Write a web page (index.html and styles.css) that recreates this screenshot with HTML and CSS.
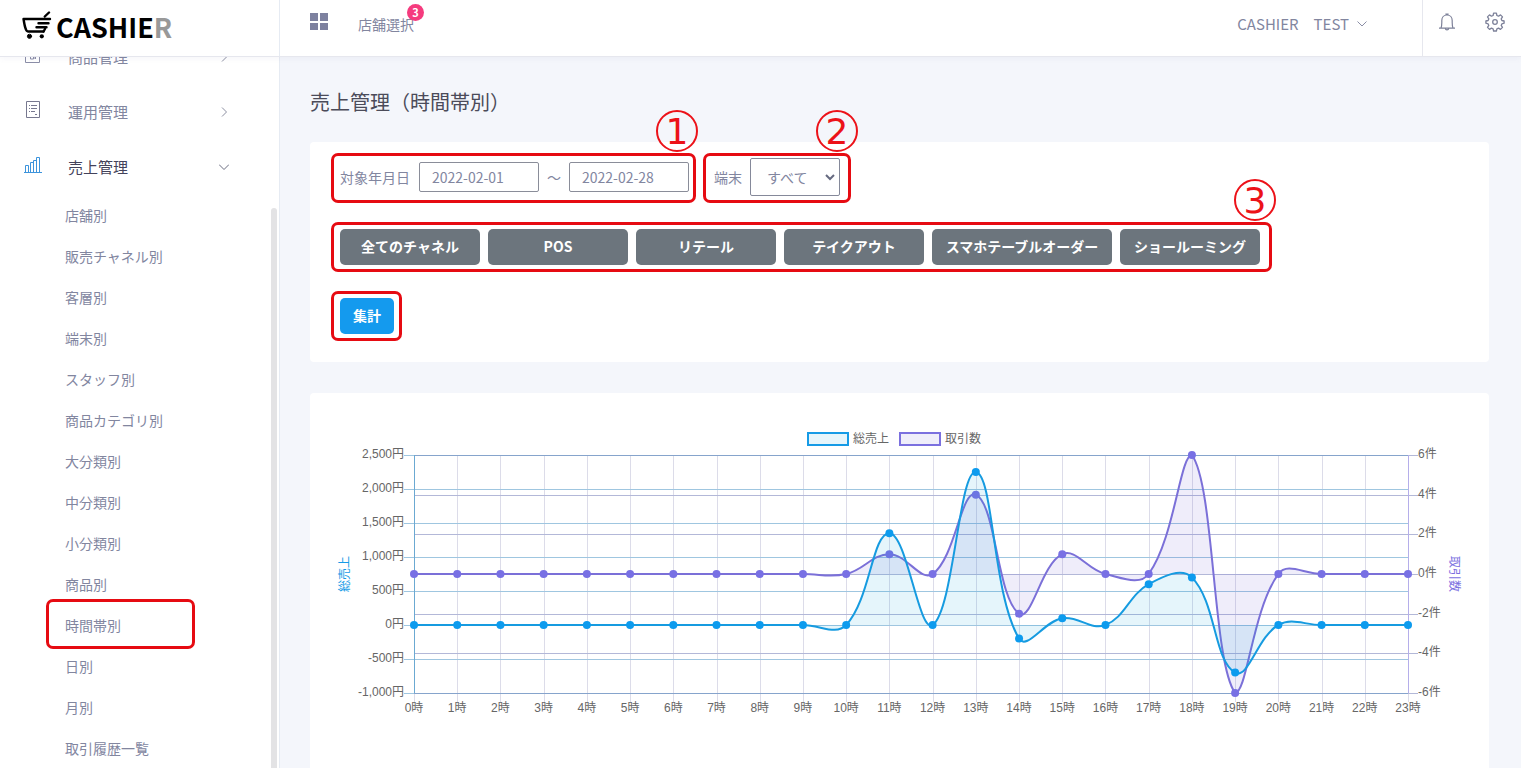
FILE: index.html
```html
<!DOCTYPE html>
<html lang="ja">
<head>
<meta charset="utf-8">
<meta name="viewport" content="width=device-width, initial-scale=1">
<title>売上管理（時間帯別）</title>
<link rel="stylesheet" href="styles.css">
</head>
<body>
<header class="topbar">
  <a class="logo" href="#">
    <svg class="logo-mark" viewBox="0 0 30 29" width="30" height="29" fill="none" stroke="#000" stroke-linecap="round" stroke-linejoin="round" aria-hidden="true">
      <path stroke-width="2.400" d="M22.800 5.500 27 1.500M28 8H1.500C2.500 14 3.500 20.500 6 20.500H21.500"/>
      <path stroke-width="2.400" d="M16.500 12.200H26.500M14.500 16.200H24.500M21.500 20.500 23 18"/>
      <circle cx="7.500" cy="25.300" r="2.100"/>
      <circle cx="7.500" cy="25.300" r="1.900" fill="#000" stroke="none"/>
      <circle cx="19.800" cy="25.300" r="2.100" fill="#000" stroke="none"/>
    </svg>
    <span class="logo-text">CASHIE<span class="logo-tail">R</span></span>
  </a>
  <div class="topbar-main">
    <button class="icon-button apps" type="button" aria-label="メニュー">
      <svg width="18" height="18" viewBox="0 0 18 18" fill="#7d819f" aria-hidden="true"><path d="M0 0h8v8H0zM10 0h8v8h-8zM0 10h8v7H0zM10 10h8v7h-8z"/></svg>
    </button>
    <a class="store-link" href="#">店舗選択<span class="badge">3</span></a>
    <button class="account" type="button">CASHIER　TEST
      <svg width="10" height="6" viewBox="0 0 10 6" fill="none" stroke="#8b8ea6" aria-hidden="true"><path d="M.5.5 5 5 9.500.5"/></svg>
    </button>
  </div>
  <div class="topbar-tools">
    <button class="icon-button" type="button" aria-label="通知">
      <svg width="18" height="18" viewBox="0 0 18 18" fill="none" stroke="#7d8199" stroke-width="1.200" aria-hidden="true"><path d="M1 15.200H17M3 15c.6-1.500.8-3 .8-5.500V7.500C3.800 4.500 5.800 2 9 2s5.200 2.500 5.200 5.500v2c0 2.500.2 4 .8 5.500M8 2V1h2v1M7.300 15.500c.2 1.800 3.200 1.800 3.400 0"/></svg>
    </button>
    <button class="icon-button" type="button" aria-label="設定">
      <svg width="20" height="20" viewBox="0 0 20 20" fill="none" stroke="#7d8199" stroke-width="1.300" stroke-linejoin="round" aria-hidden="true"><path d="M8.600 1.200h2.800l.5 2.300 1.600.7 2-1.300 2 2-1.300 2 .7 1.600 2.200.5v2.200l-2.200.6-.7 1.600 1.300 2-2 2-2-1.300-1.600.7-.5 2.200H8.600l-.5-2.200-1.600-.7-2 1.300-2-2 1.300-2-.7-1.600-2.200-.6V9l2.200-.5.7-1.600-1.300-2 2-2 2 1.300 1.600-.7z"/><circle cx="10" cy="10" r="2.300"/></svg>
    </button>
  </div>
</header>

<div class="layout">
  <aside class="sidebar">
    <nav class="menu">
      <a class="menu-item" href="#">
        <svg class="menu-icon" width="18" height="18" viewBox="0 0 18 18" fill="none" stroke="#8b8ea8" aria-hidden="true"><path d="M1.500 1.500h14v15h-14zM6.500 8v5h3V8M11.500 8v5M9.500 13l2-2"/></svg>
        <span>商品管理</span>
        <svg class="menu-arrow" width="10" height="10" viewBox="0 0 10 10" fill="none" stroke="#8b8ea0" aria-hidden="true"><path d="M3 .5 7.500 5 3 9.500"/></svg>
      </a>
      <a class="menu-item" href="#">
        <svg class="menu-icon" width="18" height="18" viewBox="0 0 18 18" fill="none" stroke="#77788f" aria-hidden="true"><path d="M2.500.5h13v16h-13zM5 4.500h1M7 4.500h6M5 7.500h1M7 7.500h6M5 10.500h1M7 10.500h4M11 13.500h2"/></svg>
        <span>運用管理</span>
        <svg class="menu-arrow" width="10" height="10" viewBox="0 0 10 10" fill="none" stroke="#8b8ea0" aria-hidden="true"><path d="M3 .5 7.500 5 3 9.500"/></svg>
      </a>
      <a class="menu-item is-open" href="#">
        <svg class="menu-icon" width="18" height="18" viewBox="0 0 18 18" fill="none" stroke="#3d94dc" aria-hidden="true"><path d="M0 16.500h18M1.500 16V9.500h3V16M6.500 16V6.500h3V16M9.500 16V4.500h3V16M12.500 16V1.500h3V16"/></svg>
        <span>売上管理</span>
        <svg class="menu-arrow" width="10" height="10" viewBox="0 0 10 10" fill="none" stroke="#6b6d80" aria-hidden="true"><path d="M0 2.500 5 7.500 10 2.500"/></svg>
      </a>
      <ul class="submenu">
        <li><a href="#">店舗別</a></li>
        <li><a href="#">販売チャネル別</a></li>
        <li><a href="#">客層別</a></li>
        <li><a href="#">端末別</a></li>
        <li><a href="#">スタッフ別</a></li>
        <li><a href="#">商品カテゴリ別</a></li>
        <li><a href="#">大分類別</a></li>
        <li><a href="#">中分類別</a></li>
        <li><a href="#">小分類別</a></li>
        <li><a href="#">商品別</a></li>
        <li class="is-marked"><a href="#" aria-current="page">時間帯別</a></li>
        <li><a href="#">日別</a></li>
        <li><a href="#">月別</a></li>
        <li><a href="#">取引履歴一覧</a></li>
      </ul>
    </nav>
    <div class="scroll-thumb"></div>
  </aside>

  <main class="content">
    <h1>売上管理（時間帯別）</h1>

    <form class="card filters">
      <div class="filter-row">
        <div class="frame dates">
          <label for="from">対象年月日</label>
          <input id="from" type="text" value="2022-02-01">
          <span>～</span>
          <input id="to" type="text" value="2022-02-28" aria-label="終了日">
          <span class="marker">1</span>
        </div>
        <div class="frame terminal">
          <label for="terminal">端末</label>
          <span class="select-box">
            <select id="terminal"><option>すべて</option></select>
            <svg width="10" height="7" viewBox="0 0 10 7" fill="none" stroke="#666a80" stroke-width="2" aria-hidden="true"><path d="M1 1 5 5 9 1"/></svg>
          </span>
          <span class="marker">2</span>
        </div>
      </div>
      <div class="frame channels">
        <button type="button">全てのチャネル</button>
        <button type="button">POS</button>
        <button type="button">リテール</button>
        <button type="button">テイクアウト</button>
        <button class="wide" type="button">スマホテーブルオーダー</button>
        <button type="button">ショールーミング</button>
        <span class="marker">3</span>
      </div>
      <div class="frame submit">
        <button class="primary" type="submit">集計</button>
      </div>
    </form>

    <section class="card chart-card" aria-label="時間帯別グラフ">
      <div class="legend">
        <span class="legend-item"><i class="swatch sales"></i>総売上</span>
        <span class="legend-item"><i class="swatch count"></i>取引数</span>
      </div>
      <svg id="chart" class="chart" role="img" aria-label="総売上と取引数"></svg>
    </section>
  </main>
</div>
<script src="chart.js"></script>
</body>
</html>
```

FILE: styles.css
```css
* { box-sizing: border-box; }

body {
  margin: 0;
  height: 100vh;
  display: flex;
  flex-direction: column;
  overflow: hidden;
  background: #f4f6fb;
  color: #82869f;
  font: 14px/20px "Noto Sans CJK JP", "Noto Sans", sans-serif;
}

a { color: inherit; text-decoration: none; }
button, input, select { font: inherit; color: inherit; }
svg { display: block; }

/* Header */
.topbar {
  display: flex;
  flex: none;
  height: 57px;
  background: #fff;
  border-bottom: 1px solid #e6e7ee;
  box-shadow: 0 1px 6px rgba(120, 110, 170, .08);
  position: relative;
  z-index: 1;
}

.logo {
  display: flex;
  gap: 4px;
  width: 280px;
  padding: 11px 0 0 22px;
  border-right: 1px solid #e6ebf3;
}

.logo-text {
  color: #000;
  font: bold 27px/32px "Noto Sans CJK JP", sans-serif;
}

.logo-tail { color: #999; }

.topbar-main {
  display: flex;
  align-items: center;
  flex: 1;
  padding: 0 55px 8px 30px;
}

.topbar-tools {
  display: flex;
  align-items: center;
  gap: 29px;
  padding: 0 16px 14px 15px;
  border-left: 1px solid #e6e7ee;
}

.icon-button, .account {
  padding: 0;
  border: 0;
  background: none;
}

.icon-button { padding-top: 2px; }
.apps { padding: 0 0 4px; }

.store-link { position: relative; margin-left: 30px; }

.badge {
  position: absolute;
  top: -10px;
  right: -10px;
  width: 17px;
  height: 17px;
  border-radius: 50%;
  background: #f53b7e;
  color: #fff;
  font-size: 11px;
  font-weight: bold;
  line-height: 17px;
  text-align: center;
}

.account {
  display: flex;
  align-items: center;
  gap: 8px;
  margin-left: auto;
  font-size: 15px;
}

/* Sidebar */
.layout { display: flex; flex: 1; min-height: 0; }

.sidebar {
  position: relative;
  width: 280px;
  flex: none;
  overflow: hidden;
  background: #fff;
  border-right: 1px solid #e6ebf3;
}

.menu { margin-top: -28px; }

.menu-item {
  display: flex;
  align-items: center;
  height: 55px;
  padding: 0 50px 0 24px;
  font-size: 15px;
}

.menu-icon { margin: -4px 26px 0 0; }
.menu-arrow { margin-left: auto; }
.is-open { color: #43425a; }

.submenu { margin: 0; padding: 0; list-style: none; }
.submenu li { position: relative; }
.submenu a { display: block; padding: 11px 0 10px 65px; }

.is-marked::after {
  content: "";
  position: absolute;
  inset: -5px 84px -4px 46px;
  border: 3px solid #e60b12;
  border-radius: 7px;
}

.scroll-thumb {
  position: absolute;
  top: 151px;
  right: 2px;
  bottom: 0;
  width: 6px;
  border-radius: 3px 3px 0 0;
  background: #e3e3e5;
}

/* Content */
.content { flex: 1; min-width: 0; padding: 30px 32px 0 30px; overflow: hidden; }

h1 {
  margin: 0 0 25px;
  color: #4b4b59;
  font-size: 20px;
  font-weight: normal;
  line-height: 30px;
}

.card { background: #fff; border-radius: 4px; }

.filters {
  display: flex;
  flex-direction: column;
  align-items: flex-start;
  gap: 19px;
  margin-bottom: 31px;
  padding: 11px 21px 21px;
}

.filter-row { display: flex; gap: 7px; }

.frame {
  position: relative;
  display: flex;
  align-items: center;
  gap: 8px;
  height: 50px;
  padding: 0 6px;
  border: 3px solid #e60b12;
  border-radius: 7px;
}

.dates, .terminal { padding-bottom: 2px; }
.dates { padding-right: 4px; }
.dates label { margin-right: 1px; }
.terminal { padding-left: 8px; padding-right: 8px; }
.channels { padding-right: 9px; }
.channels, .submit { padding-bottom: 1px; }
.submit { padding-right: 5px; }

.frame input {
  width: 120px;
  height: 30px;
  padding: 0 12px;
  border: 1px solid #8a8d99;
  border-radius: 2px;
  background: #fff;
}

.select-box { position: relative; }

.select-box select {
  display: block;
  width: 90px;
  height: 38px;
  padding: 0 16px;
  border: 1px solid #85899a;
  border-radius: 2px;
  background: #fff;
  appearance: none;
}

.select-box svg { position: absolute; top: 16px; right: 5px; pointer-events: none; }

.frame button {
  min-width: 140px;
  height: 36px;
  padding: 0 0 1px;
  border: 0;
  border-radius: 5px;
  background: #6c757d;
  color: #fff;
  font-weight: bold;
}

.frame .wide { min-width: 180px; }
.frame .primary { min-width: 54px; background: #149aee; }

.marker {
  position: absolute;
  top: -46px;
  right: -5px;
  width: 42px;
  height: 42px;
  border: 2px solid #ec1219;
  border-radius: 50%;
  color: #ec1219;
  font: 36px/40px "DejaVu Sans", sans-serif;
  text-align: center;
}

.terminal .marker { right: -10px; }
.channels .marker { right: -7px; }

/* Chart */
.chart-card { padding: 30px 30px 90px; }

.legend {
  display: flex;
  justify-content: center;
  align-items: center;
  gap: 10px;
  height: 32px;
  padding-right: 11px;
}

.legend-item { display: flex; align-items: center; gap: 4px; }

.legend-item, .chart text {
  color: #666;
  fill: #666;
  font: 12px/14px "Liberation Sans", "Noto Sans CJK JP", sans-serif;
}

.swatch { width: 42px; height: 14px; border: 2px solid; }
.swatch.sales { border-color: #169be6; background: #e6f5fb; }
.swatch.count { border-color: #7b70df; background: #efeefa; }

.chart { width: 100%; height: 262px; overflow: visible; }
.chart .title-sales { fill: #169be6; }
.chart .title-count { fill: #7b70df; }
.chart path { fill: none; }
.grid-x { stroke: #dcdce9; }
.grid-sales { stroke: #9fc6e0; }
.grid-count { stroke: #b3b8d8; }
.axis-sales { stroke: #6ba9d2; }
.axis-count { stroke: #b5aeea; }
.edge { stroke: #86a4cc; }
.chart .area-sales { fill: rgba(0, 155, 220, .1); }
.chart .area-count { fill: rgba(95, 80, 210, .1); }
.line-sales { stroke: #169be0; stroke-width: 2; }
.line-count { stroke: #7b70d8; stroke-width: 2; }
.dot-sales { fill: #0d9bee; }
.dot-count { fill: #7870e4; }
```

FILE: chart.js
```js
const sales = [0, 0, 0, 0, 0, 0, 0, 0, 0, 0, 0, 1350, 0, 2250, -200, 100, 0, 600, 700, -700, 0, 0, 0, 0];
const count = [0, 0, 0, 0, 0, 0, 0, 0, 0, 0, 0, 1, 0, 4, -2, 1, 0, 0, 6, -6, 0, 0, 0, 0];
const svg = document.getElementById('chart');
const H = 238;
const yS = v => (2500 - v) / 3500 * H;
const yC = v => (6 - v) / 12 * H;
const snap = v => Math.round(v) + 0.5;

// Smooth curve whose control points follow the neighbouring points (tension 0.4)
function curve(points, zero) {
  const clamp = y => Math.max(0, Math.min(H, y));
  const ctl = points.map((p, i) => {
    const a = points[i - 1] || p, b = points[i + 1] || p;
    const d1 = Math.hypot(p[0] - a[0], p[1] - a[1]);
    const d2 = Math.hypot(b[0] - p[0], b[1] - p[1]);
    const f1 = 0.4 * d1 / (d1 + d2), f2 = 0.4 * d2 / (d1 + d2);
    return [
      p[0] - f1 * (b[0] - a[0]), clamp(p[1] - f1 * (b[1] - a[1])),
      p[0] + f2 * (b[0] - a[0]), clamp(p[1] + f2 * (b[1] - a[1]))
    ];
  });
  let d = `M${points[0]}`;
  for (let i = 1; i < points.length; i++) {
    d += `C${ctl[i - 1][2]},${ctl[i - 1][3]} ${ctl[i][0]},${ctl[i][1]} ${points[i]}`;
  }
  return { line: d, area: `${d}L${points[points.length - 1][0]},${zero}L${points[0][0]},${zero}Z` };
}

function draw() {
  const W = svg.clientWidth, L = 74, R = W - 51;
  const x = i => L + (R - L) * i / 23;
  let out = '';
  const path = (cls, d) => { out += `<path class="${cls}" d="${d}"/>`; };
  const text = (px, py, anchor, s) => { out += `<text x="${px}" y="${py}" text-anchor="${anchor}">${s}</text>`; };

  for (let i = 0; i < 24; i++) {
    path('grid-x', `M${snap(x(i))},0V${H + 9}`);
    text(x(i), H + 19, 'middle', i + '時');
  }
  for (let v = -6; v <= 6; v += 2) {
    path('grid-count', `M${L},${snap(yC(v))}H${R + 10}`);
    text(R + 10, Math.round(yC(v)) + 3, 'start', v + '件');
  }
  for (let v = -1000; v <= 2500; v += 500) {
    path('grid-sales', `M${L - 10},${snap(yS(v))}H${R}`);
    text(L - 10, Math.round(yS(v)) + 3, 'end', v.toLocaleString('en-US') + '円');
  }
  path('edge', `M${L},0.5H${R}M${L},${H + 0.5}H${R}`);
  path('axis-sales', `M${L + 0.5},0V${H}`);
  path('axis-count', `M${snap(R)},0V${H}`);

  const pc = count.map((v, i) => [x(i), yC(v)]);
  const ps = sales.map((v, i) => [x(i), yS(v)]);
  for (const [name, pts, zero] of [['count', pc, yC(0)], ['sales', ps, yS(0)]]) {
    const c = curve(pts, zero);
    path('area-' + name, c.area);
    path('line-' + name, c.line);
    for (const p of pts) out += `<circle class="dot-${name}" cx="${p[0]}" cy="${p[1]}" r="4"/>`;
  }
  out += `<text class="title-sales" text-anchor="middle" transform="translate(9 ${H / 2}) rotate(-90)">総売上</text>`;
  out += `<text class="title-count" text-anchor="middle" transform="translate(${W - 9} ${H / 2}) rotate(90)">取引数</text>`;
  svg.innerHTML = out;
}

draw();
window.addEventListener('resize', draw);
```
